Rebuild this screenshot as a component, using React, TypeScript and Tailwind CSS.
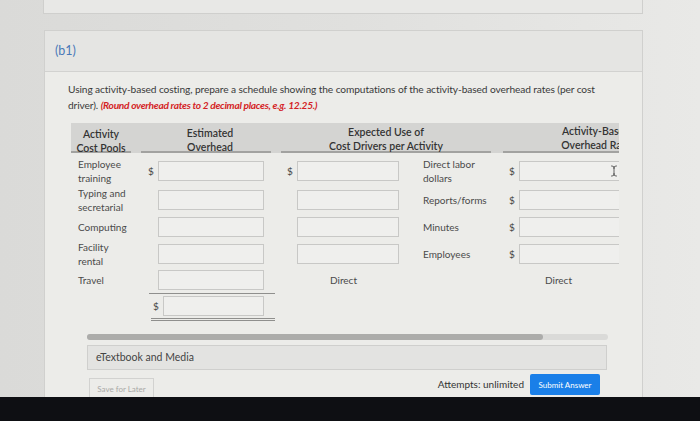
import { TextCursor } from "lucide-react";

const font = { fontFamily: "Lato, 'Open Sans', sans-serif" };

const Box = ({ className = "", children }: { className?: string; children?: React.ReactNode }) => (
  <div className={`relative h-[20px] shrink-0 bg-[#efefed] border border-[#c8c8c6] ${className}`}>{children}</div>
);

const Dollar = ({ show = true }: { show?: boolean }) => (
  <span className="w-[10px] shrink-0 text-[10px] text-[#444]">{show ? "$" : ""}</span>
);

type Row = { label: string[]; driver: string[]; h: string; direct?: boolean };

const rows: Row[] = [
  { label: ["Employee", "training"], driver: ["Direct labor", "dollars"], h: "h-[31px]" },
  { label: ["Typing and", "secretarial"], driver: ["Reports/forms"], h: "h-[27px]" },
  { label: ["Computing"], driver: ["Minutes"], h: "h-[27px]" },
  { label: ["Facility", "rental"], driver: ["Employees"], h: "h-[27px]" },
  { label: ["Travel"], driver: [], h: "h-[26px]", direct: true },
];

export default function App() {
  return (
    <div
      className="relative w-[700px] h-[421px] overflow-hidden flex flex-col bg-gradient-to-r from-[#dadad8] via-[#e0e0de] to-[#e9e9e7] text-[#3f3f3f]"
      style={font}
    >
      {/* previous card */}
      <div className="ml-[43px] w-[600px] h-[14px] shrink-0 bg-[#e8e8e6] border border-t-0 border-[#cfcfcd]" />

      {/* question card */}
      <div className="mt-[16px] ml-[44px] w-[599px] flex-1 min-h-0 flex flex-col border border-b-0 border-[#d0d0ce] overflow-hidden">
        <div className="h-[41px] shrink-0 bg-[#e5e5e3] flex items-center pl-[10px] border-b border-[#d2d2d0]">
          <span className="text-[12.5px] text-[#4a79b8]">(b1)</span>
        </div>

        <div className="flex-1 min-h-0 bg-[#ecece9] pl-[23px] pt-[9px]">
          <p className="text-[10.2px] leading-[16px] w-[540px] tracking-[-0.1px] text-[#3a3a3a]">
            Using activity-based costing, prepare a schedule showing the computations of the activity-based overhead rates (per cost driver).{" "}
            <span className="text-[#d41f26] font-bold italic tracking-[-0.3px]">(Round overhead rates to 2 decimal places, e.g. 12.25.)</span>
          </p>

          {/* table */}
          <div className="mt-[10px] ml-[3px] w-[548px] overflow-hidden">
            <div className="w-[700px]">
              <div className="flex h-[30px] bg-[#d4d4d2] text-[10.5px] font-semibold leading-[14px] text-[#333]">
                <div className="w-[60px] border-b-2 border-[#a2a2a0] flex flex-col items-center pt-[4px]">
                  <span>Activity</span>
                  <span>Cost Pools</span>
                </div>
                <div className="w-[10px]" />
                <div className="w-[130px] border-b-2 border-[#a2a2a0] flex flex-col items-center pt-[3px] pl-[8px]">
                  <span>Estimated</span>
                  <span>Overhead</span>
                </div>
                <div className="w-[10px]" />
                <div className="w-[210px] border-b-2 border-[#a2a2a0] flex flex-col items-center pt-[2px]">
                  <span>Expected Use of</span>
                  <span>Cost Drivers per Activity</span>
                </div>
                <div className="w-[12px]" />
                <div className="w-[180px] border-b-2 border-[#a2a2a0] flex flex-col items-center pt-[1px] pl-[6px]">
                  <span>Activity-Based</span>
                  <span>Overhead Rate</span>
                </div>
              </div>

              <div className="mt-[2px] text-[10px] leading-[14px]">
                {rows.map((r, i) => (
                  <div key={i} className={`flex items-center ${r.h}`}>
                    <div className="w-[70px] pl-[7px] flex flex-col text-[#4a4a4a]">
                      {r.label.map((l) => (
                        <span key={l}>{l}</span>
                      ))}
                    </div>
                    <div className="w-[140px] pl-[7px] flex items-center">
                      <Dollar show={i === 0} />
                      <Box className="w-[106px]" />
                    </div>
                    {r.direct ? (
                      <>
                        <div className="w-[222px] pl-[49px] text-[#4a4a4a]">Direct</div>
                        <div className="pl-[42px] text-[#4a4a4a]">Direct</div>
                      </>
                    ) : (
                      <>
                        <div className="w-[222px] pl-[6px] flex items-center">
                          <Dollar show={i === 0} />
                          <Box className="w-[102px]" />
                          <div className="ml-[24px] flex flex-col text-[#4a4a4a]">
                            {r.driver.map((d) => (
                              <span key={d}>{d}</span>
                            ))}
                          </div>
                        </div>
                        <div className="pl-[6px] flex items-center">
                          <Dollar />
                          <Box className="w-[140px]">
                            {i === 0 && (
                              <TextCursor className="absolute left-[88px] top-[3px] w-[12px] h-[12px] text-[#333]" strokeWidth={1.5} />
                            )}
                          </Box>
                        </div>
                      </>
                    )}
                  </div>
                ))}

                <div className="ml-[78px] w-[126px] h-[1px] bg-[#8f8f8d]" />
                <div className="flex items-center mt-[2px] ml-[82px]">
                  <Dollar />
                  <Box className="w-[101px]" />
                </div>
                <div className="ml-[80px] w-[124px] mt-[2px] h-[3px] border-y border-[#8f8f8d]" />
              </div>
            </div>
          </div>

          {/* scroll bar */}
          <div className="mt-[13px] ml-[19px] w-[521px] h-[6px] bg-[#dadad8] rounded-full">
            <div className="w-[456px] h-[6px] bg-[#acacaa] rounded-full" />
          </div>

          <div className="mt-[5px] ml-[19px] w-[520px] h-[25px] bg-[#e3e3e1] border border-[#cfcfcd] flex items-center pl-[8px] text-[10.5px] text-[#444]">
            eTextbook and Media
          </div>

          <div className="mt-[4px] ml-[21px] w-[511px] flex items-start">
            <div className="mt-[4px] w-[65px] h-[21px] border border-[#d2d2d0] flex items-center justify-center text-[8px] text-[#a9a9a7]">
              Save for Later
            </div>
            <div className="flex-1" />
            <span className="mt-[3px] text-[10px] text-[#333]">Attempts: unlimited</span>
            <div className="ml-[6px] w-[70px] h-[21px] bg-[#1a7fe8] rounded-[2px] flex items-center justify-center text-[8px] text-white">
              Submit Answer
            </div>
          </div>
        </div>
      </div>

      {/* screen bezel */}
      <div className="h-[24px] shrink-0 bg-[#0e0f13]" />
    </div>
  );
}
